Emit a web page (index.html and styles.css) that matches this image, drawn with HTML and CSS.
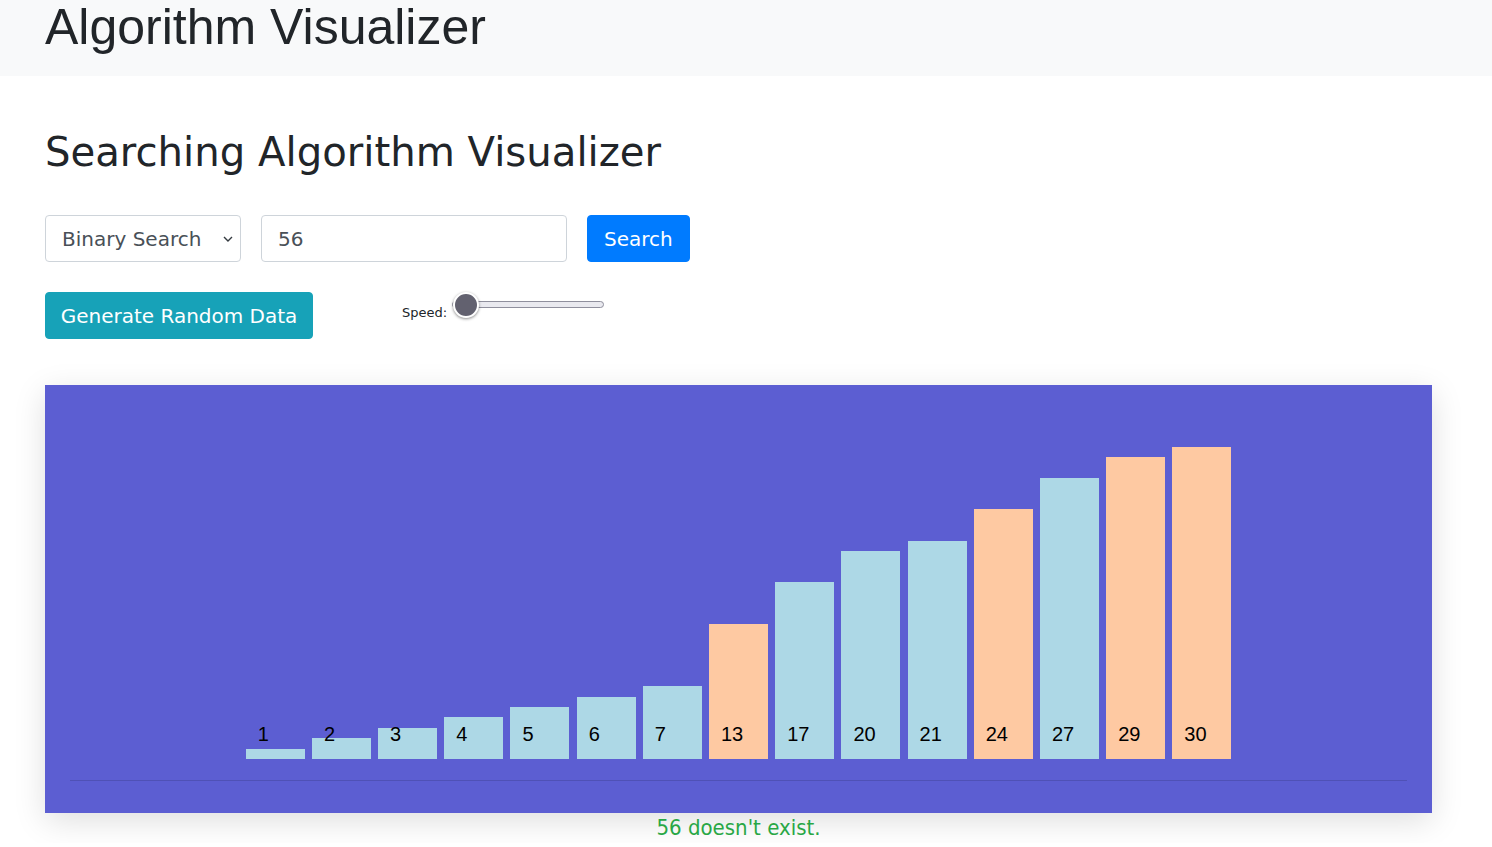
FILE: index.html
```html
<!DOCTYPE html>
<html lang="en">
<head>
<meta charset="utf-8">
<title>Algorithm Visualizer</title>
<link rel="stylesheet" href="styles.css">
</head>
<body>
<header class="topbar">
  <h1 class="brand">Algorithm Visualizer</h1>
</header>
<main class="page">
  <h2 class="title">Searching Algorithm Visualizer</h2>
  <div class="controls">
    <div class="select-wrap">
      <select class="field select">
        <option>Binary Search</option>
        <option>Linear Search</option>
      </select>
      <svg class="chevron" width="10" height="6" viewBox="0 0 10 6"><path d="M1 1l4 4 4-4" fill="none" stroke="#343a40" stroke-width="1.4"/></svg>
    </div>
    <input class="field input" type="text" value="56">
    <button class="btn btn-primary">Search</button>
  </div>
  <div class="controls second">
    <button class="btn btn-info">Generate Random Data</button>
    <div class="speed">
      <label class="speed-label" for="speed">Speed:</label>
      <input id="speed" class="range" type="range" min="0" max="100" value="0">
    </div>
  </div>
  <section class="chart">
    <div class="bars">
      <div class="bar blue" style="height:10.4px"><span class="val">1</span></div>
      <div class="bar blue" style="height:20.8px"><span class="val">2</span></div>
      <div class="bar blue" style="height:31.2px"><span class="val">3</span></div>
      <div class="bar blue" style="height:41.6px"><span class="val">4</span></div>
      <div class="bar blue" style="height:52px"><span class="val">5</span></div>
      <div class="bar blue" style="height:62.4px"><span class="val">6</span></div>
      <div class="bar blue" style="height:72.8px"><span class="val">7</span></div>
      <div class="bar peach" style="height:135.2px"><span class="val">13</span></div>
      <div class="bar blue" style="height:176.8px"><span class="val">17</span></div>
      <div class="bar blue" style="height:208px"><span class="val">20</span></div>
      <div class="bar blue" style="height:218.4px"><span class="val">21</span></div>
      <div class="bar peach" style="height:249.6px"><span class="val">24</span></div>
      <div class="bar blue" style="height:280.8px"><span class="val">27</span></div>
      <div class="bar peach" style="height:301.6px"><span class="val">29</span></div>
      <div class="bar peach" style="height:312px"><span class="val">30</span></div>
    </div>
    <hr class="baseline">
  </section>
  <p class="status">56 doesn't exist.</p>
</main>
</body>
</html>
```

FILE: styles.css
```css
* { box-sizing: border-box; }

body {
  margin: 0;
  font-family: "DejaVu Sans", Verdana, sans-serif;
  color: #212529;
  background: #ffffff;
  overflow: hidden;
}

.topbar {
  height: 76px;
  background: #f8f9fa;
  padding-left: 45px;
  overflow: hidden;
}

.brand {
  margin: -3px 0 0 0;
  font-family: "Liberation Sans", Arial, sans-serif;
  font-weight: 400;
  font-size: 50px;
  line-height: 60px;
  color: #212529;
}

.page {
  padding: 0 60px 0 45px;
}

.title {
  margin: 52px 0 0 0;
  font-size: 40.2px;
  font-weight: 400;
  line-height: 48px;
}

.controls {
  display: flex;
  align-items: center;
  gap: 20px;
  margin-top: 39px;
}

.controls.second {
  margin-top: 30px;
  align-items: flex-start;
  gap: 89px;
}

.field {
  height: 47px;
  border: 1px solid #ced4da;
  border-radius: 4px;
  background: #fff;
  font-family: "DejaVu Sans", Verdana, sans-serif;
  font-size: 20px;
  color: #495057;
  padding: 0 16px;
  line-height: 30px;
  outline: none;
}

.select-wrap {
  position: relative;
  width: 196px;
}

.select {
  width: 196px;
  appearance: none;
  -webkit-appearance: none;
  padding-right: 30px;
}

.chevron {
  position: absolute;
  right: 8px;
  top: 21px;
  pointer-events: none;
}

.input {
  width: 306px;
}

.btn {
  height: 47px;
  border: 1px solid transparent;
  border-radius: 4px;
  padding: 0 16px;
  font-family: "DejaVu Sans", Verdana, sans-serif;
  font-size: 20px;
  line-height: 30px;
  color: #fff;
  cursor: pointer;
}

.btn-primary {
  background: #007bff;
  border-color: #007bff;
}

.btn-info {
  background: #17a2b8;
  border-color: #17a2b8;
  width: 268px;
  padding: 0;
}

.speed {
  display: flex;
  align-items: flex-start;
  gap: 5px;
}

.speed-label {
  font-size: 13px;
  line-height: 16px;
  margin-top: 13px;
  color: #212529;
}

.range {
  -webkit-appearance: none;
  appearance: none;
  width: 152px;
  height: 25px;
  margin: 0;
  background: transparent;
}

.range::-webkit-slider-runnable-track {
  height: 7px;
  background: #e9e9ef;
  border: 1px solid #8f8f9d;
  border-radius: 4px;
}

.range::-webkit-slider-thumb {
  -webkit-appearance: none;
  width: 26px;
  height: 26px;
  margin-top: -10.5px;
  border-radius: 50%;
  background: #62616f;
  border: 2px solid #ffffff;
  box-shadow: 0 1px 3px rgba(0, 0, 0, 0.45);
}

.chart {
  margin-top: 46px;
  height: 428px;
  background: #5c5ed2;
  padding: 0 25px 32px;
  display: flex;
  flex-direction: column;
  box-shadow: 0 8px 30px rgba(0, 0, 0, 0.13);
}

.bars {
  height: 374px;
  display: flex;
  align-items: flex-end;
  justify-content: center;
  gap: 7.2px;
}

.bar {
  position: relative;
  width: 59px;
  flex: none;
}

.bar.blue { background: #add8e6; }
.bar.peach { background: #fec9a2; }

.val {
  position: absolute;
  left: 12px;
  bottom: 15px;
  font-family: "Liberation Sans", Arial, sans-serif;
  font-size: 20px;
  line-height: 20px;
  color: #000;
}

.baseline {
  margin: 21px 0 0 0;
  border: 0;
  border-top: 1px solid #4f51b6;
  height: 0;
}

.status {
  margin: 0;
  text-align: center;
  font-family: "DejaVu Sans Condensed", "DejaVu Sans", sans-serif;
  font-size: 22px;
  line-height: 30px;
  color: #28a745;
}
```
